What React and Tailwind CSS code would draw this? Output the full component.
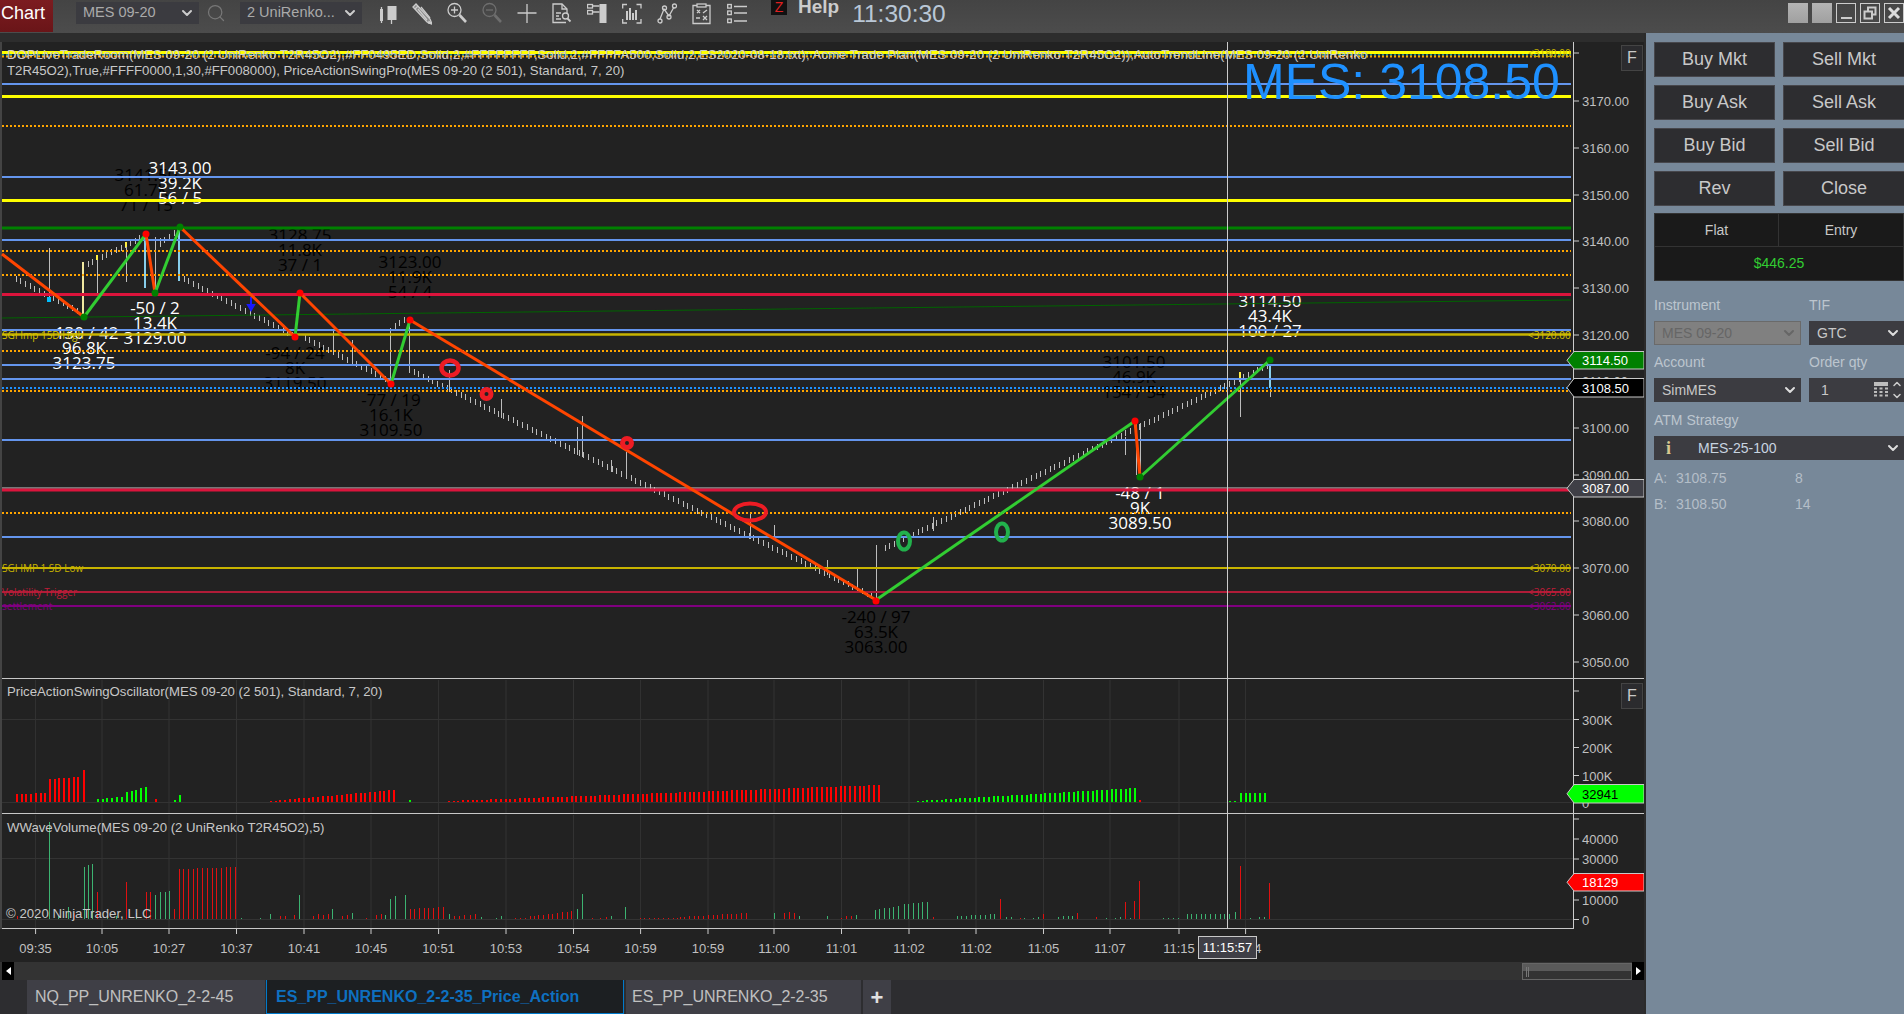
import React from 'react';
import { ChevronDown, ChevronUp, Search } from 'lucide-react';

// price levels drawn across the main pane, y in page pixels
const levels = [
  { y: 52.5, c: '#ffff00', w: 3 },
  { y: 55, c: '#00ffff', w: 1, dot: true },
  { y: 56.5, c: '#ffa500', w: 2, dot: true },
  { y: 84, c: '#6495ed', w: 2 },
  { y: 96.5, c: '#ffff00', w: 3 },
  { y: 126, c: '#ffa500', w: 2, dot: true },
  { y: 177, c: '#6495ed', w: 2 },
  { y: 200.5, c: '#ffff00', w: 3 },
  { y: 228, c: '#008000', w: 3 },
  { y: 240, c: '#6495ed', w: 2 },
  { y: 251, c: '#ffa500', w: 2, dot: true },
  { y: 275, c: '#ffa500', w: 2, dot: true },
  { y: 294.5, c: '#dc143c', w: 3 },
  { y: 330, c: '#6495ed', w: 2 },
  { y: 334.5, c: '#c8b400', w: 2.5 },
  { y: 351, c: '#ffa500', w: 2, dot: true },
  { y: 365, c: '#6495ed', w: 2 },
  { y: 379, c: '#6495ed', w: 2 },
  { y: 388, c: '#1e90ff', w: 2, dot: true },
  { y: 391, c: '#ffa500', w: 2, dot: true },
  { y: 440, c: '#6495ed', w: 2 },
  { y: 488, c: '#cccccc', w: 1 },
  { y: 490, c: '#dc143c', w: 3 },
  { y: 513, c: '#ffa500', w: 2, dot: true },
  { y: 537, c: '#6495ed', w: 2 },
  { y: 568, c: '#c8b400', w: 2 },
  { y: 592, c: '#b01c38', w: 2 },
  { y: 606, c: '#800080', w: 2 },
];

const priceTicks = [
  [53, ''], [101, '3170.00'], [148, '3160.00'], [195, '3150.00'], [241, '3140.00'], [288, '3130.00'],
  [335, '3120.00'], [381, '3110.00'], [428, '3100.00'], [475, '3090.00'], [521, '3080.00'],
  [568, '3070.00'], [615, '3060.00'], [662, '3050.00'],
];

const zigzag = [
  [[2, 254], [84, 317], '#ff4500'],
  [[84, 317], [146, 234], '#32cd32'],
  [[146, 234], [155, 293], '#ff4500'],
  [[155, 293], [180, 227], '#32cd32'],
  [[180, 227], [295, 337], '#ff4500'],
  [[295, 337], [300, 293], '#32cd32'],
  [[300, 293], [391, 384], '#ff4500'],
  [[391, 384], [410, 320], '#32cd32'],
  [[410, 320], [876, 600], '#ff4500'],
  [[876, 600], [1135, 421], '#32cd32'],
  [[1135, 421], [1140, 477], '#ff4500'],
  [[1140, 477], [1270, 360], '#32cd32'],
];

const pivots = [
  [84, 317, '#008000'], [146, 234, '#ff0000'], [155, 293, '#008000'], [180, 227, '#008000'],
  [295, 337, '#ff0000'], [300, 293, '#ff0000'], [391, 384, '#ff0000'], [410, 320, '#ff0000'],
  [876, 601, '#ff0000'], [1135, 421, '#ff0000'], [1140, 477, '#008000'], [1270, 360, '#008000'],
];

// renko bars: straight runs of small ticks
const tickRuns = [
  [16, 279, 80, 313], [88, 264, 143, 236], [160, 243, 178, 230], [184, 279, 292, 335],
  [305, 338, 388, 381], [395, 326, 405, 320], [414, 372, 872, 596], [885, 548, 1265, 366],
];

const wicks = [
  [49, 248, 297], [83, 262, 316], [97, 257, 293], [126, 242, 282], [155, 237, 293], [160, 238, 247],
  [333, 330, 353], [352, 340, 363], [390, 328, 383], [409, 322, 373], [449, 370, 392], [501, 399, 418],
  [577, 427, 455], [582, 416, 457], [611, 460, 472], [626, 452, 478], [750, 513, 539], [774, 525, 540],
  [827, 560, 575], [857, 568, 588], [876, 545, 600], [933, 517, 531], [1125, 437, 455], [1136, 423, 475],
  [1140, 423, 477], [1240, 372, 417], [1270, 388, 397],
];

const blueWicks = [[145, 237, 288], [179, 227, 281], [1270, 365, 388]];
const yellowTips = [[83, 262, 316], [97, 255, 260], [126, 242, 247], [1240, 372, 378]];

const blackText = '#000000';
const swingLabels = [
  [146, 175, ['3141.50', '61.7K', '71 / 15'], blackText],
  [300, 235, ['3128.75', '11.8K', '37 / 1'], blackText],
  [410, 262, ['3123.00', '11.9K', '54 / 4'], blackText],
  [295, 353, ['-94 / 24', '8K', '3119.50'], blackText],
  [391, 400, ['-77 / 19', '16.1K', '3109.50'], blackText],
  [876, 617, ['-240 / 97', '63.5K', '3063.00'], blackText],
  [1134, 362, ['3101.50', '46.9K', '154 / 54'], blackText],
  [180, 168, ['3143.00', '39.2K', '56 / 5'], '#ffffff'],
  [84, 333, ['-130 / 42', '96.8K', '3123.75'], '#ffffff'],
  [155, 308, ['-50 / 2', '13.4K', '3129.00'], '#ffffff'],
  [1140, 493, ['-48 / 1', '9K', '3089.50'], '#ffffff'],
  [1270, 301, ['3114.50', '43.4K', '100 / 27'], '#ffffff'],
];

const timeTicks = [
  [35.6, '09:35'], [102, '10:05'], [169, '10:27'], [236.5, '10:37'], [304, '10:41'], [371, '10:45'],
  [438.6, '10:51'], [506, '10:53'], [573.5, '10:54'], [640.6, '10:59'], [708, '10:59'], [774, '11:00'],
  [841.5, '11:01'], [909, '11:02'], [976, '11:02'], [1043.5, '11:05'], [1110, '11:07'], [1179, '11:15'],
  [1245.6, '11:24'],
];

const STEP = 4.72;
const run = (x0, x1, h0, h1, c) => {
  const out = [];
  const n = Math.round((x1 - x0) / STEP);
  for (let i = 0; i <= n; i++) {
    out.push([x0 + i * STEP, h0 + (h1 - h0) * (n ? i / n : 0), c]);
  }
  return out;
};

const RED = '#ff0000';
const LIME = '#00ff00';
const oscBars = [
  ...run(17, 45, 8, 9, RED), ...run(50, 80, 23, 25, RED), [84, 32, RED],
  ...run(98, 122, 3, 5, LIME), ...run(127, 146, 10, 15, LIME), [156, 3, RED], [175, 2, LIME], [180, 7, LIME],
  ...run(271, 392, 1, 12, RED), [410, 2, LIME], ...run(449, 877, 1, 17, RED),
  ...run(918, 1135, 1, 14, LIME), [1140, 2, RED], [1230, 1, LIME], [1235, 1, LIME], ...run(1241, 1265, 9, 9, LIME),
];

const VG = '#3cb371';
const VR = '#e01010';
const volBars = [
  [17, 3, VR], [36, 2, VG], [49, 97, VG], [58, 3, VG], [68, 12, VG], [74, 6, VR], [84, 52, VG], [88, 54, VG], [92, 55, VG], [97.5, 27, VR],
  [107, 4, VG], [116, 3, VG], [126, 37, VR], [136, 6, VG], [146, 27, VR], [150, 27, VR], [155, 24, VG], [160, 27, VG], [165, 27, VG], [169, 28, VG], [174, 10, VR],
  ...run(179, 236.5, 50, 52, VR), [241, 1, VG], [260, 1, VG], [270, 5, VG], [280, 3, VR], [285, 3, VR], [294, 4, VR], [299, 24, VG],
  [313, 3, VR], [318, 5, VR], [323, 4, VR], [328, 5, VR], [332, 10, VG], [342, 3, VR], [347, 4, VR], [352, 6, VG],
  [366, 1, VR], [376, 4, VR], [381, 5, VR], [385, 4, VG], [390, 20, VG], [395, 23, VG], [405, 24, VG],
  ...run(410, 444, 10, 12, VR), [449, 5, VG], [454, 3, VR], [459, 3, VR], [464, 4, VR], [470, 4, VR], [475, 5, VR], [481, 2, VG],
  [496, 1, VG], [501, 3, VG], [515, 1, VR], [520, 1, VR], [525, 1, VR], [530, 3, VR],
  ...run(534, 572, 3, 8, VR), [577, 10, VG], [582.6, 25, VG], [592, 1, VR], [600, 1, VR], [606, 2, VR], [611, 3, VG], [625, 12, VG],
  ...run(640, 680, 1, 1, VR), ...run(680, 748, 2, 6, VR), [774, 6, VG], [784, 6, VR], [789, 7, VR], [794, 6, VR], [799, 3, VG],
  [827, 3, VG], [841, 1, VR], [846, 3, VR], [851, 3, VR], [856, 4, VG],
  ...run(875, 900, 9, 13, VG), ...run(904, 929, 15, 17, VG), [933, 2, VR], ...run(957, 995, 3, 5, VG), [1000, 20, VR],
  [1006, 2, VG], [1011, 2, VG], [1020, 1, VR], [1024, 1, VG], [1033, 1, VG], [1038, 2, VG], [1043, 5, VR],
  [1058, 2, VG], [1063, 3, VG], [1068, 3, VG], [1072, 3, VG], [1077, 6, VR], [1096, 2, VR], [1106, 1, VG], [1115, 1, VG], [1120, 2, VG], [1125, 17, VR],
  [1130, 1, VG], [1134.6, 18, VR], [1139, 38, VR], [1163, 1, VG], [1168, 1, VG], [1173, 1, VG], [1178, 1, VG],
  ...run(1187, 1230, 5, 5, VG), [1235, 7, VG], [1240, 53, VR], [1250, 1, VG], [1259, 2, VG], [1264, 2, VG], [1269, 36, VR],
];

const Tag = ({ top, bottom, fill, stroke = '#c8c8c8', color = '#ffffff', children }) => {
  const mid = (top + bottom) / 2;
  return (
    <g>
      <polygon
        points={`1567,${mid} 1574,${top} 1644,${top} 1644,${bottom} 1574,${bottom}`}
        fill={fill}
        stroke={stroke}
      />
      <text x="1582" y={mid + 5} fill={color} className="text-[13px]">{children}</text>
    </g>
  );
};

const TopIcon = ({ children }) => (
  <svg width="20" height="24" viewBox="0 0 20 24" fill="none" stroke="#cccccc" strokeWidth="1.3" className="shrink-0">
    {children}
  </svg>
);

const Toolbar = () => (
  <div className="ml-[15px] flex gap-[15px] pt-[1px]">
    <TopIcon>
      <path d="M4.5 6v16M14.5 19v4" />
      <rect x="3" y="8" width="3" height="12" fill="#cccccc" stroke="none" />
      <rect x="10.5" y="5" width="9" height="14" fill="#cccccc" stroke="none" />
    </TopIcon>
    <TopIcon>
      <path d="M1 6 L4 3 L18 18 L20 23 L15 21 Z" fill="#8a8a8a" />
      <path d="M3 8 L6 5 M6 8 L15 19 M9 6 L18 17" />
      <path d="M17 20.5 L20 23 L16.5 22 Z" fill="#e8e8e8" />
    </TopIcon>
    <TopIcon>
      <circle cx="7.5" cy="9" r="6.5" />
      <path d="M7.5 5.5v7M4 9h7" />
      <path d="M12.5 14 L19 21" strokeWidth="2.6" />
    </TopIcon>
    <svg width="20" height="24" viewBox="0 0 20 24" fill="none" stroke="#6e6e6e" strokeWidth="1.3" className="shrink-0">
      <circle cx="7.5" cy="9" r="6.5" />
      <path d="M4 9h7" />
      <path d="M12.5 14 L19 21" strokeWidth="2.6" />
    </svg>
    <TopIcon>
      <path d="M10 3v19M0.5 12h19" />
    </TopIcon>
    <TopIcon>
      <path d="M14 21.5H1V3h9l5 5v4" />
      <path d="M10 3v5h5M4 12h5M4 15h3M4 18h5" />
      <circle cx="13.5" cy="15" r="3" />
      <path d="M15.5 17.5l3 3" strokeWidth="1.8" />
    </TopIcon>
    <TopIcon>
      <rect x="0.5" y="3.5" width="5" height="3.5" />
      <rect x="0.5" y="9.5" width="5" height="3.5" />
      <path d="M5.5 5h7M5.5 11h7" />
      <rect x="12.5" y="3" width="7" height="19" fill="#cccccc" stroke="none" />
    </TopIcon>
    <TopIcon>
      <path d="M5 3.5H0.7v4M14.5 3.5h4.5v4M5 22H0.7v-4M14.5 22h4.5v-4" />
      <path d="M5 10v9M8 7v12M11 12v7M14 9v10" strokeWidth="2" />
    </TopIcon>
    <TopIcon>
      <path d="M3 18 L7 8 L12 15 L17 6" />
      <circle cx="3" cy="20" r="2" />
      <circle cx="7.5" cy="7" r="2" />
      <circle cx="12" cy="16" r="2" />
      <circle cx="17.5" cy="5" r="2" />
    </TopIcon>
    <TopIcon>
      <path d="M5 4.5H1v18h17v-18h-4" />
      <rect x="5" y="3" width="9" height="3" />
      <path d="M5 9l3 3M8 9l-3 3M11 12l4-3M11 15l4 4M15 15l-4 4M4 17h4" />
    </TopIcon>
    <TopIcon>
      <rect x="0.7" y="3.5" width="3.6" height="3.6" />
      <rect x="0.7" y="10" width="3.6" height="3.6" />
      <rect x="0.7" y="18" width="3.6" height="3.6" />
      <path d="M7 5.5h13M7 12h13M7 20h13" strokeWidth="1.6" />
    </TopIcon>
  </div>
);

const Header = () => (
  <div className="flex h-[33px] shrink-0 items-start bg-gradient-to-b from-[#444444] to-[#4c4c4c]">
    <div className="flex h-[32px] w-[53px] shrink-0 items-start bg-gradient-to-b from-[#7c1c20] to-[#6a1518] pl-[1px] pt-[2px] text-[18px] leading-[22px] text-white">
      Chart
    </div>
    <div className="ml-[23px] mt-[2px] flex h-[22px] w-[123px] items-center justify-between bg-[#3b3b40] pl-[7px] pr-[4px] text-[14.5px] text-[#aaaaaa]">
      <span>MES 09-20</span>
      <ChevronDown size={16} strokeWidth={3} className="text-[#cccccc]" />
    </div>
    <Search size={20} strokeWidth={1.5} className="ml-[7px] mt-[3px] text-[#777777]" />
    <div className="ml-[14px] mt-[2px] flex h-[22px] w-[122px] items-center justify-between bg-[#3b3b40] pl-[7px] pr-[4px] text-[14.5px] text-[#aaaaaa]">
      <span>2 UniRenko...</span>
      <ChevronDown size={16} strokeWidth={3} className="text-[#cccccc]" />
    </div>
    <Toolbar />
    <div className="ml-[24px] flex h-[15px] w-[16px] items-center justify-center bg-[#111111] text-[14px] text-[#e02020]">Z</div>
    <div className="ml-[11px] text-[19px] font-bold leading-[14px] text-[#cccccc]">Help</div>
    <div className="ml-[13px] mt-[2px] text-[24.5px] leading-[24px] text-[#b9c7d6]">11:30:30</div>
    <div className="ml-auto mt-[3px] flex gap-[4px] overflow-hidden">
      <div className="h-[20px] w-[20px] bg-gradient-to-b from-[#b4b4b4] to-[#a0a0a0]" />
      <div className="h-[20px] w-[20px] bg-gradient-to-b from-[#b4b4b4] to-[#a0a0a0]" />
      <div className="flex h-[20px] w-[20px] items-end justify-center border border-[#cccccc] pb-[3px]">
        <div className="h-[2px] w-[11px] bg-[#cccccc]" />
      </div>
      <div className="flex h-[20px] w-[20px] items-center justify-center border border-[#cccccc]">
        <svg width="14" height="14" viewBox="0 0 14 14" fill="none" stroke="#cccccc" strokeWidth="2">
          <rect x="5" y="1.5" width="7.5" height="7" />
          <rect x="1.5" y="5.5" width="7.5" height="7" fill="#484848" />
        </svg>
      </div>
      <div className="flex h-[20px] w-[20px] shrink-0 items-center justify-center border border-[#cccccc]">
        <svg width="14" height="14" viewBox="0 0 14 14" stroke="#dddddd" strokeWidth="3">
          <path d="M2 2l10 10M12 2L2 12" />
        </svg>
      </div>
    </div>
  </div>
);

const FButton = ({ className }) => (
  <div className={`absolute left-[1621px] flex h-[26px] w-[22px] items-center justify-center border border-[#444444] bg-[#2b2b2e] text-[16px] text-[#c8c8c8] ${className}`}>
    F
  </div>
);

const MainPane = () => (
  <div className="relative h-[637px] shrink-0">
    <svg width="1644" height="637" viewBox="0 42 1644 637" className="block font-['Liberation_Sans']">
      <g stroke="#bdbdbd" strokeWidth="1" shapeRendering="crispEdges">
        {tickRuns.map(([x0, y0, x1, y1], i) => {
          const n = Math.round((x1 - x0) / STEP);
          return Array.from({ length: n + 1 }, (_, k) => {
            const x = x0 + k * STEP;
            const y = y0 + ((y1 - y0) * k) / n;
            return <line key={`${i}-${k}`} x1={x} x2={x} y1={y - 3} y2={y + 3} />;
          });
        })}
        {wicks.map(([x, a, b], i) => (
          <line key={i} x1={x} x2={x} y1={a} y2={b} />
        ))}
      </g>
      <g shapeRendering="crispEdges">
        {blueWicks.map(([x, a, b], i) => (
          <line key={i} x1={x} x2={x} y1={a} y2={b} stroke="#87ceeb" strokeWidth="2" />
        ))}
        {yellowTips.map(([x, a, b], i) => (
          <line key={i} x1={x} x2={x} y1={a} y2={b} stroke={i === 0 ? '#f0e8a0' : '#ffee44'} strokeWidth="2" />
        ))}
        <rect x="47" y="297" width="4" height="5" fill="#00bfff" />
      </g>

      {swingLabels.map(([x, y, lines, color], i) => (
        <text key={i} textAnchor="middle" fill={color} className="font-['Open_Sans'] text-[17px]">
          {lines.map((t, j) => (
            <tspan key={j} x={x} y={y + j * 15 + 6}>{t}</tspan>
          ))}
        </text>
      ))}

      {levels.map((l, i) => (
        <line
          key={i}
          x1="2"
          x2="1571"
          y1={l.y}
          y2={l.y}
          stroke={l.c}
          strokeWidth={l.w}
          strokeDasharray={l.dot ? '2 2' : undefined}
        />
      ))}
      <line x1="2" y1="318" x2="1571" y2="300" stroke="#006400" strokeWidth="1" />

      <g className="font-['Open_Sans'] text-[10px]">
        <text x="2" y="339" fill="#d8c400">SGI Imp 15D High</text>
        <text x="2" y="572" fill="#c8b400">SGI IMP 1 SD Low</text>
        <text x="2" y="596" fill="#c01c38">Volatility Trigger</text>
        <text x="2" y="610" fill="#800080">settlement</text>
        <text x="1528" y="339" fill="#d8c400">&lt;3120.00</text>
        <text x="1528" y="572" fill="#c8b400">&lt;3070.00</text>
        <text x="1528" y="596" fill="#c01c38">&lt;3065.00</text>
        <text x="1528" y="610" fill="#800080">&lt;3062.00</text>
        <text x="1528" y="57" fill="#c8b400">&lt;3180.00</text>
      </g>

      <path d="M251 297v10M248 305l3 5 3-5z" stroke="#1818ff" strokeWidth="2" fill="#1818ff" />

      {zigzag.map(([a, b, c], i) => (
        <line key={i} x1={a[0]} y1={a[1]} x2={b[0]} y2={b[1]} stroke={c} strokeWidth="3" />
      ))}
      {pivots.map(([x, y, c], i) => (
        <circle key={i} cx={x} cy={y} r="3.5" fill={c} />
      ))}

      <g fill="none" strokeWidth="4">
        <ellipse cx="450" cy="368" rx="8.5" ry="7.5" stroke="#ed1c24" strokeWidth="4.5" />
        <ellipse cx="750" cy="512" rx="16" ry="8.5" stroke="#ed1c24" />
        <ellipse cx="904" cy="541" rx="6" ry="8.5" stroke="#22b14c" />
        <ellipse cx="1002" cy="532" rx="6" ry="8.5" stroke="#22b14c" />
      </g>
      <circle cx="486.5" cy="394" r="4.5" fill="none" stroke="#ed1c24" strokeWidth="5" />
      <circle cx="627" cy="443" r="4.5" fill="none" stroke="#ed1c24" strokeWidth="5" />

      <text x="1243" y="99" fill="#1e90ff" className="text-[50px]">MES: 3108.50</text>

      <line x1="1227.5" x2="1227.5" y1="42" y2="679" stroke="#cccccc" />
      <line x1="1573.5" x2="1573.5" y1="42" y2="679" stroke="#cccccc" />
      <g fill="#c0c0c0" className="text-[13px]">
        {priceTicks.map(([y, t]) => (
          <g key={y}>
            <line x1="1574" x2="1579" y1={y} y2={y} stroke="#cccccc" />
            <text x="1582" y={y + 5}>{t}</text>
          </g>
        ))}
      </g>
      <Tag top={351.5} bottom={369} fill="#008000">3114.50</Tag>
      <Tag top={378.5} bottom={397} fill="#000000">3108.50</Tag>
      <Tag top={479.5} bottom={497} fill="#3f3f46">3087.00</Tag>
      <line x1="2" x2="1644" y1="678.5" y2="678.5" stroke="#c8c8c8" />
    </svg>
    <div className="absolute left-[7px] top-[5px] w-[1400px] text-[13.2px] leading-[16px] text-[#c8c8c8]">
      <div className="whitespace-nowrap">DOPLiveTradeRoom(MES 09-20 (2 UniRenko T2R45O2),#FF0495ED,Solid,2,#FFFFFFFF,Solid,2,#FFFFA500,Solid,2,ES2020-08-18.txt); Acme Trade Plan(MES 09-20 (2 UniRenko T2R45O2)),AutoTrendLine(MES 09-20 (2 UniRenko</div>
      <div className="whitespace-nowrap">T2R45O2),True,#FFFF0000,1,30,#FF008000), PriceActionSwingPro(MES 09-20 (2 501), Standard, 7, 20)</div>
    </div>
    <FButton className="top-[3px]" />
  </div>
);

const gridX = timeTicks.map(([x]) => x);

const OscPane = () => (
  <div className="relative h-[135px] shrink-0">
    <svg width="1644" height="135" viewBox="0 679 1644 135" className="block font-['Liberation_Sans']">
      <g stroke="#333333">
        {gridX.map((x) => <line key={x} x1={x} x2={x} y1="680" y2="813" />)}
        <line x1="2" x2="1573" y1="719.5" y2="719.5" />
        <line x1="2" x2="1573" y1="802.5" y2="802.5" />
      </g>
      <g shapeRendering="crispEdges">
        {oscBars.map(([x, h, c], i) => (
          <rect key={i} x={x - 1} y={802 - h} width="2" height={h} fill={c} />
        ))}
      </g>
      <line x1="1227.5" x2="1227.5" y1="679" y2="814" stroke="#cccccc" />
      <line x1="1573.5" x2="1573.5" y1="679" y2="814" stroke="#cccccc" />
      <g fill="#c0c0c0" className="text-[13px]">
        {[[691, ''], [719.5, '300K'], [747.5, '200K'], [775.5, '100K'], [802.5, '0']].map(([y, t]) => (
          <g key={y}>
            <line x1="1574" x2="1579" y1={y} y2={y} stroke="#cccccc" />
            <text x="1582" y={y + 5}>{t}</text>
          </g>
        ))}
      </g>
      <Tag top={784.5} bottom={803} fill="#00ff00" color="#000000">32941</Tag>
      <line x1="2" x2="1644" y1="813.5" y2="813.5" stroke="#c8c8c8" />
    </svg>
    <div className="absolute left-[7px] top-[5px] text-[13.2px] leading-[16px] text-[#c8c8c8]">
      PriceActionSwingOscillator(MES 09-20 (2 501), Standard, 7, 20)
    </div>
    <FButton className="top-[4px]" />
  </div>
);

const VolPane = () => (
  <div className="relative h-[115px] shrink-0">
    <svg width="1644" height="115" viewBox="0 814 1644 115" className="block font-['Liberation_Sans']">
      <g stroke="#333333">
        {gridX.map((x) => <line key={x} x1={x} x2={x} y1="815" y2="928" />)}
        <line x1="2" x2="1573" y1="858.5" y2="858.5" />
        <line x1="2" x2="1573" y1="919.5" y2="919.5" />
      </g>
      <g shapeRendering="crispEdges">
        {volBars.map(([x, h, c], i) => (
          <line key={i} x1={x} x2={x} y1={919 - h} y2="919" stroke={c} strokeWidth="1" />
        ))}
      </g>
      <line x1="1227.5" x2="1227.5" y1="814" y2="928" stroke="#cccccc" />
      <line x1="1573.5" x2="1573.5" y1="814" y2="929" stroke="#cccccc" />
      <g fill="#c0c0c0" className="text-[13px]">
        {[[819, ''], [839, '40000'], [859, '30000'], [880, '20000'], [900, '10000'], [919.5, '0']].map(([y, t]) => (
          <g key={y}>
            <line x1="1574" x2="1579" y1={y} y2={y} stroke="#cccccc" />
            <text x="1582" y={y + 5}>{t}</text>
          </g>
        ))}
      </g>
      <Tag top={873.5} bottom={891} fill="#ff0000">18129</Tag>
      <line x1="2" x2="1574" y1="928.5" y2="928.5" stroke="#c8c8c8" />
    </svg>
    <div className="absolute left-[7px] top-[6px] text-[13.2px] leading-[16px] text-[#c8c8c8]">
      WWaveVolume(MES 09-20 (2 UniRenko T2R45O2),5)
    </div>
    <div className="absolute left-[6px] top-[92px] text-[13.2px] leading-[16px] text-[#c8c8c8]">
      © 2020 NinjaTrader, LLC
    </div>
  </div>
);

const TimeAxis = () => (
  <div className="relative h-[33px] shrink-0">
    <svg width="1644" height="33" viewBox="0 929 1644 33" className="block font-['Liberation_Sans']">
      {timeTicks.map(([x, t], i) => (
        <g key={i}>
          <line x1={x} x2={x} y1="929" y2="934" stroke="#cccccc" />
          <text x={x} y="953" textAnchor="middle" fill="#c0c0c0" className="text-[13px]">{t}</text>
        </g>
      ))}
    </svg>
    <div className="absolute left-[1198px] top-[7px] flex h-[23px] w-[59px] items-center justify-center border border-[#c8c8c8] bg-[#3f3f46] text-[13px] text-white">
      11:15:57
    </div>
  </div>
);

const ScrollRow = () => (
  <div className="flex h-[18px] shrink-0 items-center bg-[#333333] pl-[2px]">
    <div className="flex h-[18px] w-[12px] items-center justify-center bg-black">
      <div className="h-0 w-0 border-y-[4px] border-r-[5px] border-y-transparent border-r-white" />
    </div>
    <div className="ml-auto flex h-[17px] w-[110px] border border-[#666666] bg-gradient-to-b from-[#5a5a5a] from-50% to-[#333333] to-50% pl-[3px]">
      <div className="mt-[3px] h-[10px] w-[3px] border-x border-[#777777]" />
    </div>
    <div className="flex h-[18px] w-[12px] items-center justify-center bg-black">
      <div className="h-0 w-0 border-y-[4px] border-l-[5px] border-y-transparent border-l-white" />
    </div>
  </div>
);

const Tabs = () => (
  <div className="flex h-[34px] shrink-0 gap-[2px] bg-[#2d2d30] pl-[27px] text-[16px]">
    <div className="flex w-[238px] items-center bg-[#3f3f46] pl-[8px] text-[#c0c0c0]">NQ_PP_UNRENKO_2-2-45</div>
    <div className="-ml-[1px] flex w-[358px] items-center border-x border-b border-[#007acc] bg-[#1c1f22] pl-[9px] font-bold text-[#0e70c0]">
      ES_PP_UNRENKO_2-2-35_Price_Action
    </div>
    <div className="flex w-[235px] items-center bg-[#3f3f46] pl-[6px] text-[#c0c0c0]">ES_PP_UNRENKO_2-2-35</div>
    <div className="flex w-[28px] items-center justify-center bg-[#3f3f46] text-[22px] font-bold text-[#e0e0e0]">+</div>
  </div>
);

const OrderButton = ({ children }) => (
  <div className="flex h-[35px] items-center justify-center border border-[#47474c] bg-[#2d2d30] text-[18px] text-[#c8c8c8]">
    {children}
  </div>
);

const FieldLabel = ({ children }) => (
  <div className="text-[14px] leading-[16px] text-[#bcc5ce]">{children}</div>
);

const Select = ({ children, disabled }) => (
  <div
    className={
      disabled
        ? 'flex h-[24px] items-center justify-between border border-[#6a6a6a] bg-[#808080] pl-[7px] pr-[3px] text-[14px] text-[#666666]'
        : 'flex h-[24px] items-center justify-between bg-[#3c3c41] pl-[8px] pr-[3px] text-[14px] text-[#c8c8c8]'
    }
  >
    {children}
    <ChevronDown size={16} strokeWidth={3} className={disabled ? 'text-[#666666]' : 'text-[#dddddd]'} />
  </div>
);

const OrderPanel = () => (
  <div className="flex h-[981px] w-[258px] shrink-0 flex-col overflow-hidden bg-[#778899] pl-[8px] pt-[9px]">
    <div className="grid w-[251px] grid-cols-[121px_122px] gap-x-[8px] gap-y-[8px]">
      <OrderButton>Buy Mkt</OrderButton>
      <OrderButton>Sell Mkt</OrderButton>
      <OrderButton>Buy Ask</OrderButton>
      <OrderButton>Sell Ask</OrderButton>
      <OrderButton>Buy Bid</OrderButton>
      <OrderButton>Sell Bid</OrderButton>
      <OrderButton>Rev</OrderButton>
      <OrderButton>Close</OrderButton>
    </div>
    <div className="mt-[7px] w-[250px] border border-[#333333] bg-[#1a1a1a] text-[14px]">
      <div className="flex h-[33px] border-b border-[#333333] text-[#c8c8c8]">
        <div className="flex w-[124px] items-center justify-center border-r border-[#333333]">Flat</div>
        <div className="flex flex-1 items-center justify-center">Entry</div>
      </div>
      <div className="flex h-[33px] items-center justify-center text-[#32cd32]">$446.25</div>
    </div>
    <div className="mt-[16px] grid w-[250px] grid-cols-[147px_95px] gap-x-[8px]">
      <div>
        <FieldLabel>Instrument</FieldLabel>
        <div className="mt-[8px]"><Select disabled>MES 09-20</Select></div>
      </div>
      <div>
        <FieldLabel>TIF</FieldLabel>
        <div className="mt-[8px]"><Select>GTC</Select></div>
      </div>
      <div className="mt-[9px]">
        <FieldLabel>Account</FieldLabel>
        <div className="mt-[8px]"><Select>SimMES</Select></div>
      </div>
      <div className="mt-[9px]">
        <FieldLabel>Order qty</FieldLabel>
        <div className="mt-[8px] flex h-[24px] items-center bg-[#3c3c41] pl-[12px] pr-[1px] text-[14px] text-[#c8c8c8]">
          <span>1</span>
          <svg width="14" height="16" viewBox="0 0 14 16" className="ml-auto" fill="#bdbdbd">
            <rect x="0" y="0" width="14" height="4" />
            <path d="M0 5.5h3v2H0zM5.5 5.5h3v2h-3zM11 5.5h3v2h-3zM0 9h3v2H0zM5.5 9h3v2h-3zM11 9h3v2h-3zM0 12.5h3v2H0zM5.5 12.5h3v2h-3zM11 12.5h3v2h-3z" />
          </svg>
          <div className="ml-[3px] flex flex-col text-[#cccccc]">
            <ChevronUp size={12} strokeWidth={3} />
            <ChevronDown size={12} strokeWidth={3} />
          </div>
        </div>
      </div>
    </div>
    <div className="mt-[10px] w-[250px]">
      <FieldLabel>ATM Strategy</FieldLabel>
      <div className="mt-[8px] flex h-[24px] items-center bg-[#3c3c41] pr-[3px] text-[14px] text-[#c8d4e0]">
        <span className="ml-[12px] w-[32px] font-['Liberation_Serif'] text-[18px] font-bold text-[#d8c890]">i</span>
        <span>MES-25-100</span>
        <ChevronDown size={16} strokeWidth={3} className="ml-auto text-[#dddddd]" />
      </div>
    </div>
    <div className="mt-[9px] flex h-[18px] items-center text-[14px] text-[#b4bec8]">
      <span className="w-[22px]">A:</span>
      <span className="w-[119px]">3108.75</span>
      <span>8</span>
    </div>
    <div className="mt-[8px] flex h-[18px] items-center text-[14px] text-[#b4bec8]">
      <span className="w-[22px]">B:</span>
      <span className="w-[119px]">3108.50</span>
      <span>14</span>
    </div>
  </div>
);

const App = () => (
  <div className="flex h-[1014px] w-[1904px] flex-col overflow-hidden bg-[#2d2d30] font-['Liberation_Sans',Arial,sans-serif]">
    <Header />
    <div className="flex flex-1">
      <div className="flex w-[1646px] shrink-0 flex-col border-r-2 border-[#2b2b2b]">
        <div className="h-[9px] shrink-0 bg-[#2d2d2d]" />
        <div className="flex h-[887px] shrink-0 flex-col border-l-2 border-[#444444] bg-[#222222] [&>*]:-ml-[2px]">
          <MainPane />
          <OscPane />
          <VolPane />
        </div>
        <div className="h-[33px] shrink-0 bg-[#222222]"><TimeAxis /></div>
        <ScrollRow />
        <Tabs />
      </div>
      <OrderPanel />
    </div>
  </div>
);

export default App;
